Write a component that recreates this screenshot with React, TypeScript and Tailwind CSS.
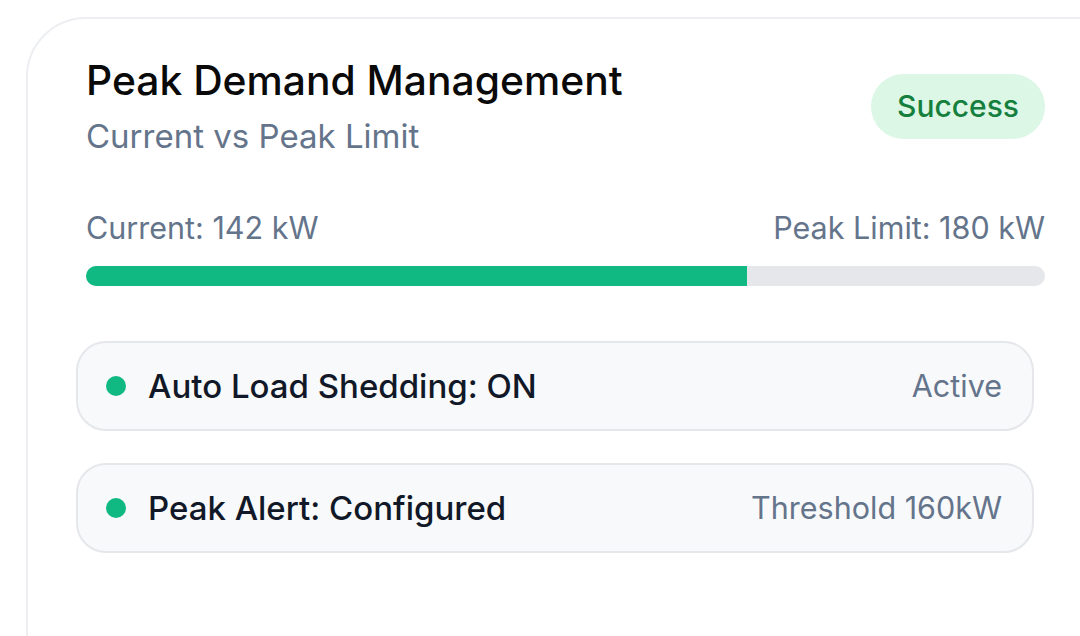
import React from "react";

type Rule = {
  label: string;
  meta: string;
};

const rules: Rule[] = [
  { label: "Auto Load Shedding: ON", meta: "Active" },
  { label: "Peak Alert: Configured", meta: "Threshold 160kW" },
];

export default function App() {
  const current = 142;
  const pct = 68.9;

  return (
    <div className="h-[636px] w-[1080px] overflow-hidden bg-white font-['Inter',sans-serif]">
      <div className="ml-[26px] mt-[17px] w-[1100px] h-[700px] rounded-tl-[60px] border-2 border-[#eceef1] bg-white pt-[37px] pl-[58px] pr-[60px]">
        {/* Header */}
        <header className="flex w-[959px] items-center justify-between">
          <div>
            <h2 className="text-[40.8px] leading-[48px] font-medium text-[#0a0a0a]">
              Peak Demand Management
            </h2>
            <p className="mt-[12px] text-[33px] leading-[40px] text-[#64748b]">
              Current vs Peak Limit
            </p>
          </div>
          <span className="flex h-[65px] items-center rounded-full bg-[#dcf7e6] px-[26px] text-[30px] font-medium text-[#15803d]">
            Success
          </span>
        </header>

        {/* Usage */}
        <div className="mt-[54px] w-[959px]">
          <div className="flex justify-between text-[30.5px] leading-[36px] text-[#64748b]">
            <span>Current: {current} kW</span>
            <span>Peak Limit: 180 kW</span>
          </div>
          <div className="mt-[20px] h-[20px] w-full overflow-hidden rounded-full bg-[#e5e7eb]">
            <div className="h-full bg-[#10b981]" style={{ width: `${pct}%` }} />
          </div>
        </div>

        {/* Rules */}
        <div className="ml-[-10px] mt-[55px] flex w-[958px] flex-col gap-[32px]">
          {rules.map((r) => (
            <div
              key={r.label}
              className="flex h-[90px] items-center justify-between rounded-[30px] border-2 border-[#e5e7eb] bg-[#f8f9fb] pl-[28px] pr-[30px]"
            >
              <div className="flex items-center gap-[22px]">
                <span className="h-[20px] w-[20px] rounded-full bg-[#10b981]" />
                <span className="text-[33px] leading-[40px] font-medium text-[#111827]">
                  {r.label}
                </span>
              </div>
              <span className="text-[30.5px] leading-[36px] text-[#64748b]">{r.meta}</span>
            </div>
          ))}
        </div>
      </div>
    </div>
  );
}
